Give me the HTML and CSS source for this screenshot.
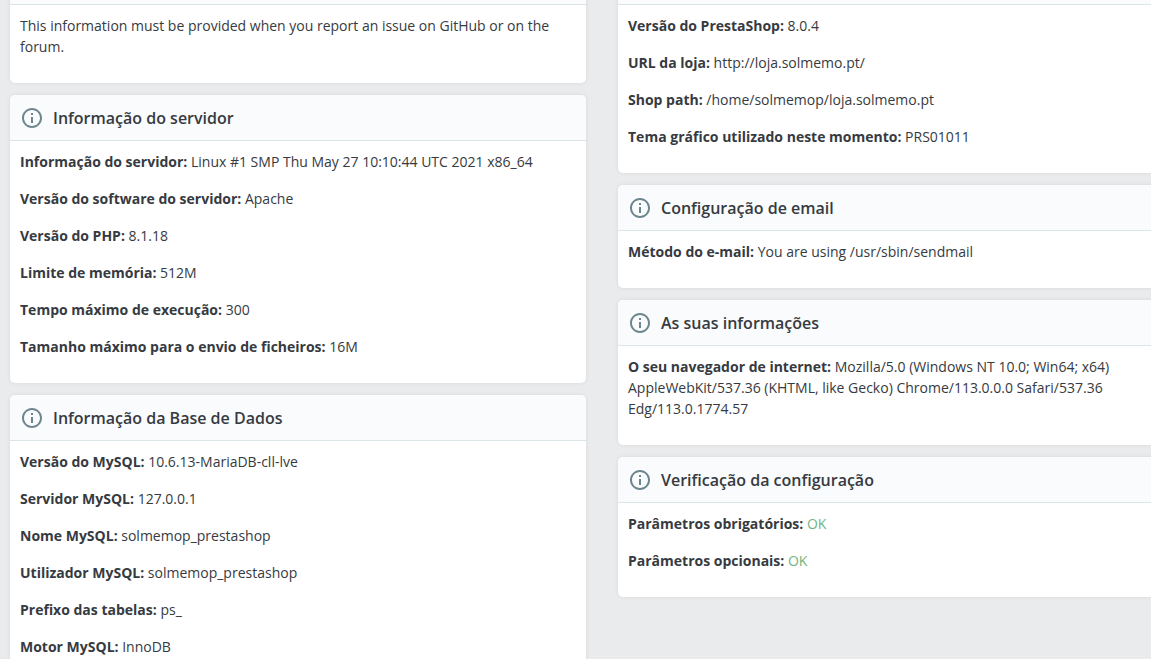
FILE: index.html
```html
<!DOCTYPE html>
<html lang="pt">
<head>
<meta charset="utf-8">
<title>Informação de configuração</title>
<link rel="stylesheet" href="styles.css">
</head>
<body>
<svg class="sprite" width="0" height="0" aria-hidden="true">
  <symbol id="info" viewBox="0 0 24 24">
    <path d="M11 7h2v2h-2zm0 4h2v6h-2zm1-9C6.48 2 2 6.48 2 12s4.48 10 10 10 10-4.48 10-10S17.52 2 12 2zm0 18c-4.41 0-8-3.59-8-8s3.59-8 8-8 8 3.59 8 8-3.59 8-8 8z"/>
  </symbol>
</svg>
<main class="page">
  <div class="column">
    <section class="card">
      <header class="card-header"></header>
      <div class="card-body">
        <p class="row">This information must be provided when you report an issue on GitHub or on the forum.</p>
      </div>
    </section>
    <section class="card">
      <header class="card-header"><svg class="icon"><use href="#info"/></svg><h3 class="card-title">Informação do servidor</h3></header>
      <div class="card-body">
        <p class="row"><strong>Informação do servidor:</strong> Linux #1 SMP Thu May 27 10:10:44 UTC 2021 x86_64</p>
        <p class="row"><strong>Versão do software do servidor:</strong> Apache</p>
        <p class="row"><strong>Versão do PHP:</strong> 8.1.18</p>
        <p class="row"><strong>Limite de memória:</strong> 512M</p>
        <p class="row"><strong>Tempo máximo de execução:</strong> 300</p>
        <p class="row"><strong>Tamanho máximo para o envio de ficheiros:</strong> 16M</p>
      </div>
    </section>
    <section class="card">
      <header class="card-header"><svg class="icon"><use href="#info"/></svg><h3 class="card-title">Informação da Base de Dados</h3></header>
      <div class="card-body">
        <p class="row"><strong>Versão do MySQL:</strong> 10.6.13-MariaDB-cll-lve</p>
        <p class="row"><strong>Servidor MySQL:</strong> 127.0.0.1</p>
        <p class="row"><strong>Nome MySQL:</strong> solmemop_prestashop</p>
        <p class="row"><strong>Utilizador MySQL:</strong> solmemop_prestashop</p>
        <p class="row"><strong>Prefixo das tabelas:</strong> ps_</p>
        <p class="row"><strong>Motor MySQL:</strong> InnoDB</p>
      </div>
    </section>
  </div>
  <div class="column">
    <section class="card">
      <header class="card-header"></header>
      <div class="card-body">
        <p class="row"><strong>Versão do PrestaShop:</strong> 8.0.4</p>
        <p class="row"><strong>URL da loja:</strong> http://loja.solmemo.pt/</p>
        <p class="row"><strong>Shop path:</strong> /home/solmemop/loja.solmemo.pt</p>
        <p class="row"><strong>Tema gráfico utilizado neste momento:</strong> PRS01011</p>
      </div>
    </section>
    <section class="card">
      <header class="card-header"><svg class="icon"><use href="#info"/></svg><h3 class="card-title">Configuração de email</h3></header>
      <div class="card-body">
        <p class="row"><strong>Método do e-mail:</strong> You are using /usr/sbin/sendmail</p>
      </div>
    </section>
    <section class="card">
      <header class="card-header"><svg class="icon"><use href="#info"/></svg><h3 class="card-title">As suas informações</h3></header>
      <div class="card-body">
        <p class="row row-narrow"><strong>O seu navegador de internet:</strong> Mozilla/5.0 (Windows NT 10.0; Win64; x64) AppleWebKit/537.36 (KHTML, like Gecko) Chrome/113.0.0.0 Safari/537.36 Edg/113.0.1774.57</p>
      </div>
    </section>
    <section class="card">
      <header class="card-header"><svg class="icon"><use href="#info"/></svg><h3 class="card-title">Verificação da configuração</h3></header>
      <div class="card-body">
        <p class="row"><strong>Parâmetros obrigatórios:</strong> <span class="ok">OK</span></p>
        <p class="row"><strong>Parâmetros opcionais:</strong> <span class="ok">OK</span></p>
      </div>
    </section>
  </div>
</main>
</body>
</html>
```
FILE: styles.css
```css
html, body {
  margin: 0;
  height: 659px;
  overflow: hidden;
  background: #eaebec;
}
body {
  font-family: "Open Sans", sans-serif;
  font-size: 14px;
  line-height: 21px;
  color: #363a41;
}
.sprite {
  display: block;
  height: 0;
}
.page {
  display: grid;
  grid-template-columns: 576px 576px;
  column-gap: 32px;
  align-items: start;
  margin-top: -41px;
  padding-left: 10px;
  width: 1300px;
}
.column {
  display: flex;
  flex-direction: column;
  gap: 12px;
}
.card {
  background: #fff;
  border-radius: 5px;
  box-shadow: 0 0 4px rgba(0, 0, 0, .08);
  overflow: hidden;
}
.card-header {
  display: flex;
  align-items: center;
  gap: 9px;
  box-sizing: border-box;
  height: 46px;
  padding: 0 10px;
  background: #fafbfc;
  border-bottom: 1px solid #dbe6e9;
}
.icon {
  width: 24px;
  height: 24px;
  flex: none;
  fill: #6c868e;
}
.card-title {
  margin: 0;
  font-size: 16px;
  font-weight: 600;
  line-height: 22px;
}
.card-body {
  padding: 10px 10px 10px;
}
.row {
  margin: 0 0 16px;
}
.row-narrow {
  max-width: 500px;
}
strong {
  font-weight: 700;
}
.ok {
  color: #70b580;
}
```
